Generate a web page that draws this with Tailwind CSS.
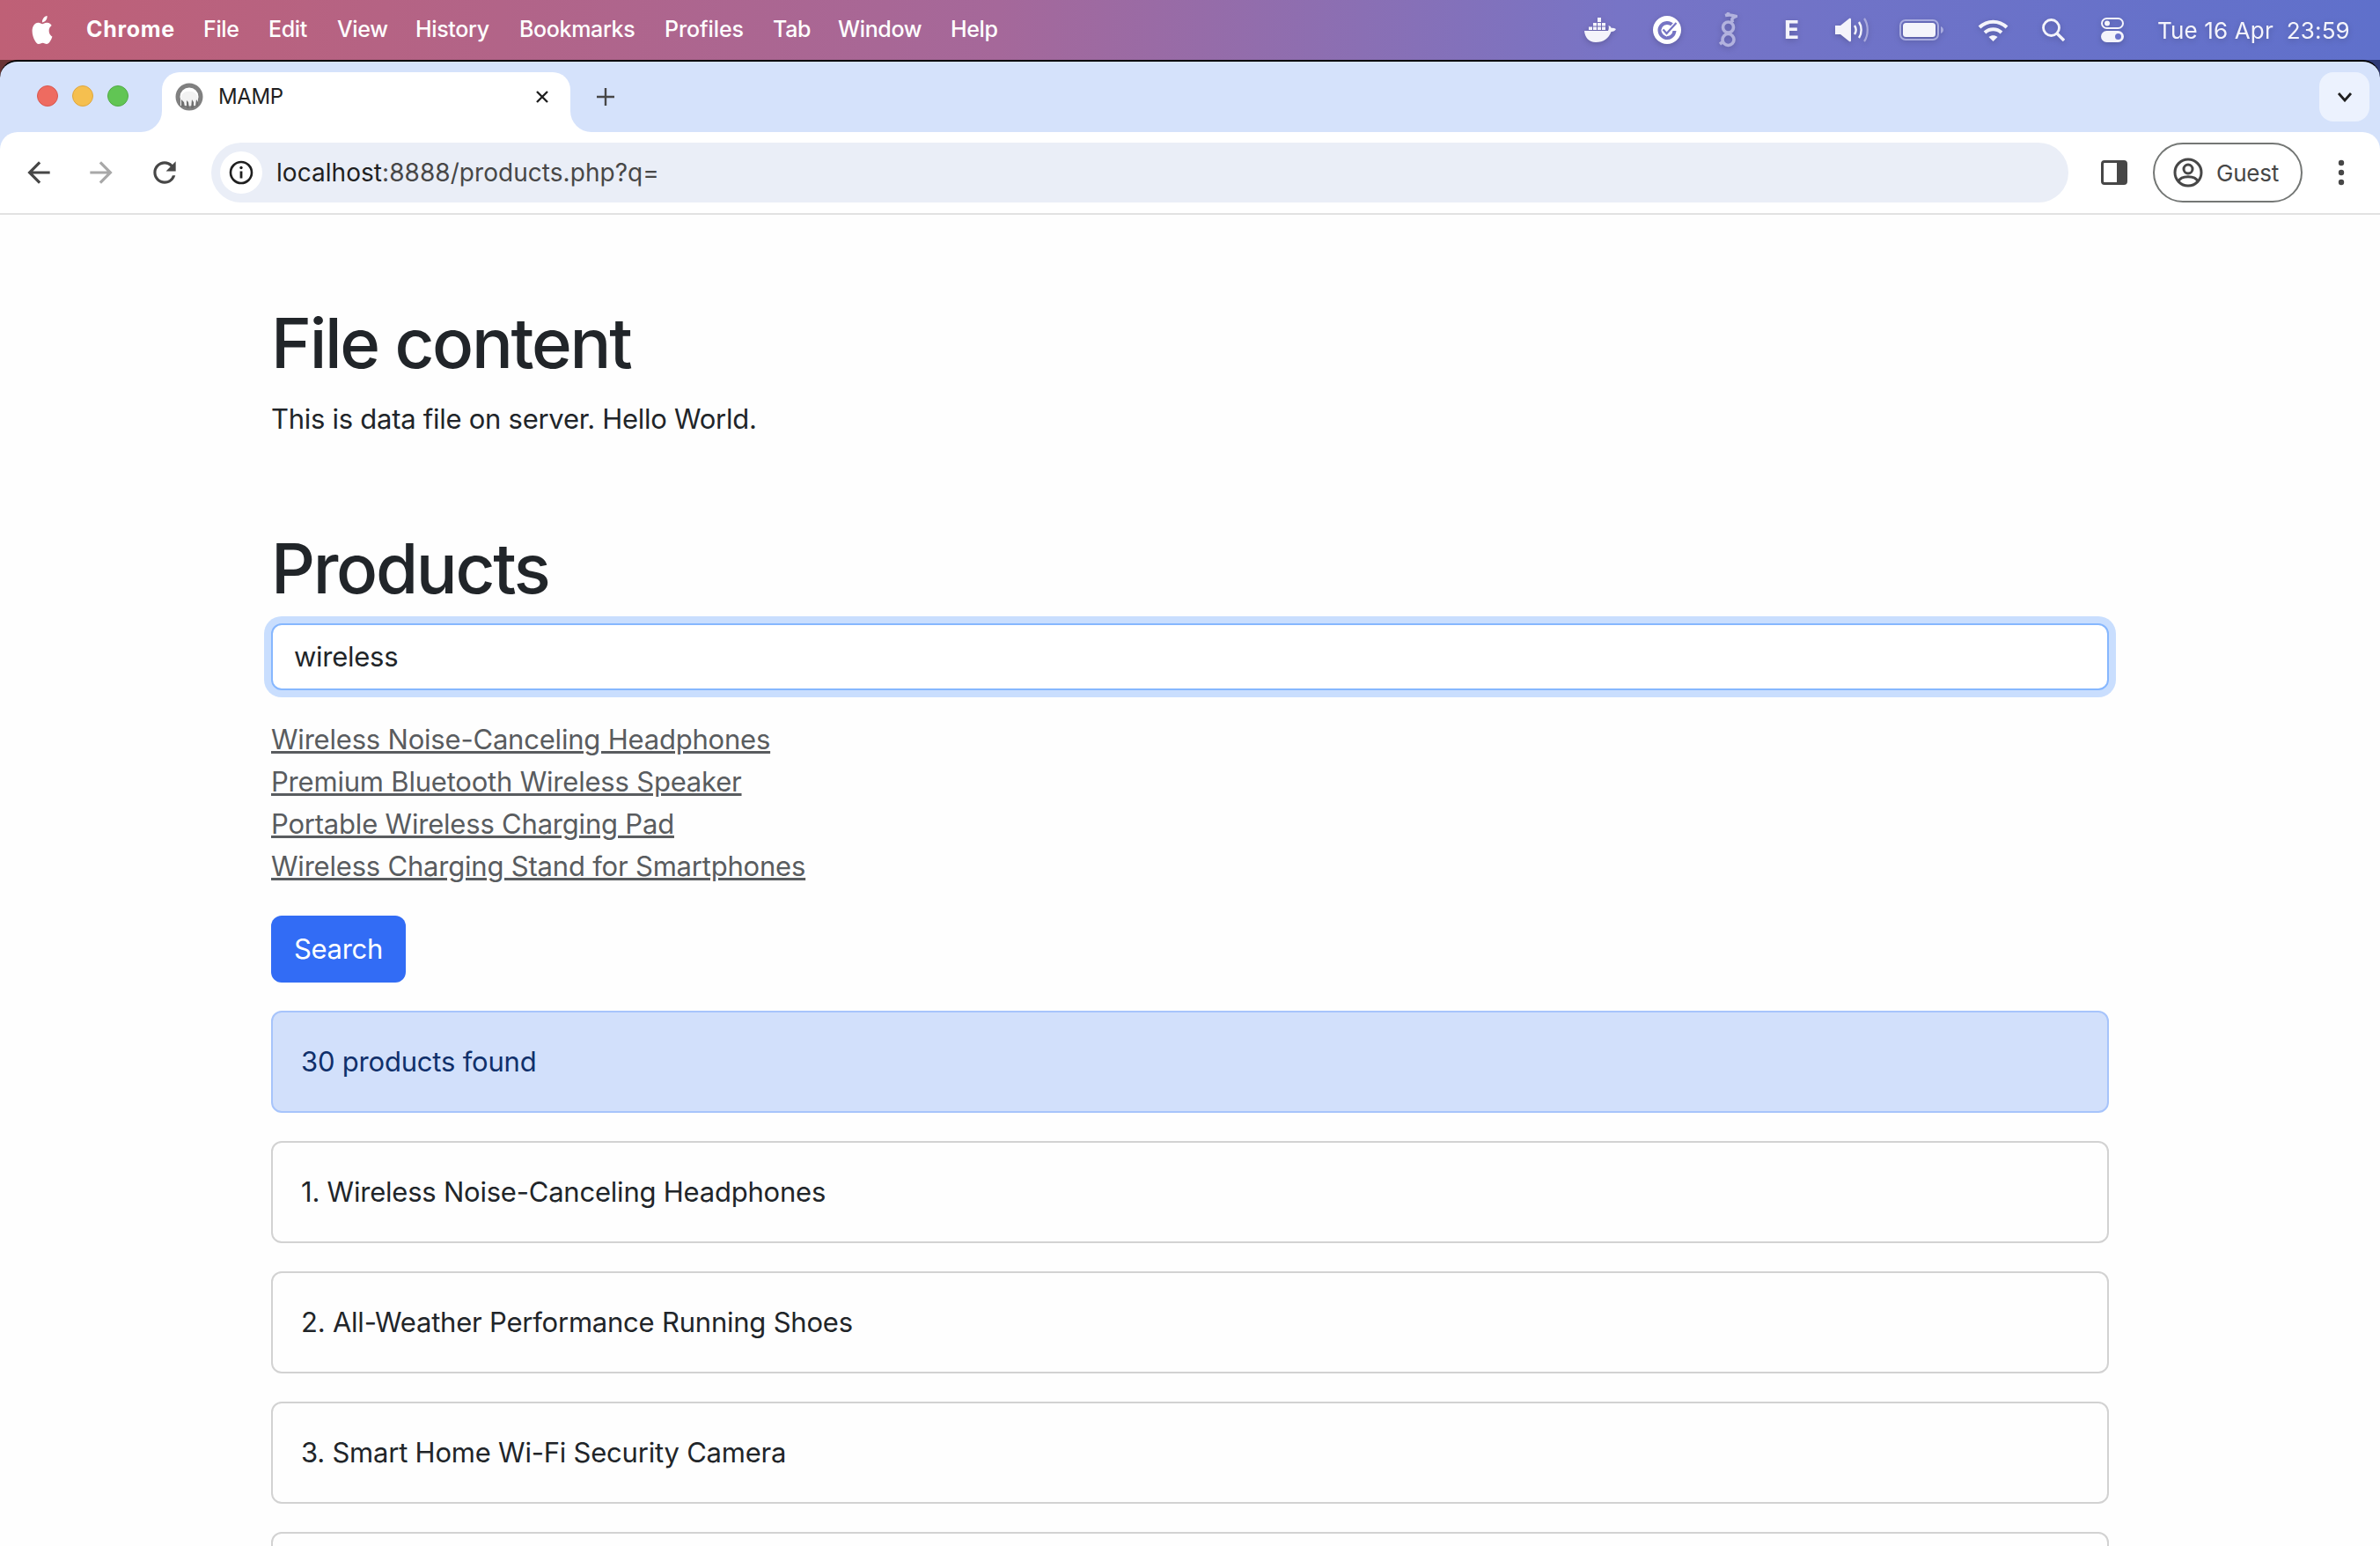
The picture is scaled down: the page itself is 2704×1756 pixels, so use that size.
<!DOCTYPE html>
<html lang="en">

<head>
    <meta charset="UTF-8">
    <meta name="viewport" content="width=device-width, initial-scale=1.0">
    <title>MAMP</title>
    <script src="https://cdn.jsdelivr.net/npm/@tailwindcss/browser@4"></script>
</head>

<body class="w-[2704px] h-[1756px] overflow-hidden bg-white font-['Inter',sans-serif] text-[#212529]">
    <!-- macOS menu bar + wallpaper behind the window corners -->
    <div class="h-[1756px] flex flex-col bg-[linear-gradient(90deg,#bf6076,#a5689a_42%,#7774c6_68%,#5f70cb)]">
        <div class="h-[68px] shrink-0 flex items-center text-white text-[25px] tracking-[-0.35px] font-medium">
            <svg class="ml-[34px] w-[28px] h-[32px] mr-[36px]" viewBox="0 0 24 24" fill="#fff" preserveAspectRatio="none"><path d="M12.152 6.896c-.948 0-2.415-1.078-3.96-1.04-2.04.027-3.91 1.183-4.961 3.014-2.117 3.675-.546 9.103 1.519 12.09 1.013 1.454 2.208 3.09 3.792 3.039 1.52-.065 2.09-.987 3.935-.987 1.831 0 2.35.987 3.96.948 1.637-.026 2.676-1.48 3.676-2.948 1.156-1.688 1.636-3.325 1.662-3.415-.039-.013-3.182-1.221-3.22-4.857-.026-3.04 2.48-4.494 2.597-4.559-1.429-2.09-3.623-2.324-4.39-2.376-2-.156-3.675 1.09-4.61 1.09zM15.53 3.83c.843-1.012 1.4-2.427 1.245-3.83-1.207.052-2.662.805-3.532 1.818-.78.896-1.454 2.338-1.273 3.714 1.338.104 2.715-.688 3.559-1.701"/></svg>
            <span class="w-[133px] font-bold tracking-[0.7px]">Chrome</span>
            <span class="w-[74px]">File</span>
            <span class="w-[78px]">Edit</span>
            <span class="w-[89px]">View</span>
            <span class="w-[118px]">History</span>
            <span class="w-[165px]">Bookmarks</span>
            <span class="w-[123px] tracking-[-0.1px]">Profiles</span>
            <span class="w-[74px]">Tab</span>
            <span class="w-[128px]">Window</span>
            <span>Help</span>

            <!-- status icons -->
            <div class="ml-auto flex items-center drop-shadow-[0_2px_3px_rgba(0,0,0,0.18)]">
                <svg class="w-[36px] h-[28px]" viewBox="0 0 36 28" fill="#f4f4fb"><path d="M0 15h27c1-2 1-4 .5-6 1.600.3 2.800 1.500 3.300 3 1.500-.4 3.200-.1 5.200.9-1 2-3 3.100-5.500 3C28 23 22 28 13 28 5 28 .5 22 0 15z"/><path d="M5 10.500h4v3.500H5zM10 10.500h4v3.500h-4zM15 10.500h4v3.500h-4zM20 10.500h4v3.500h-4zM10 6h4v3.500h-4zM15 6h4v3.500h-4zM20 6h4v3.500h-4zM15 0h4v5h-4z"/></svg>
                <svg class="ml-[42px] w-[32px] h-[32px]" viewBox="0 0 32 32"><circle cx="16" cy="16" r="16" fill="#fff"/><path d="M22.500 11a8.500 8.500 0 1 0 2 6" fill="none" stroke="#7674c4" stroke-width="4"/><path d="M11.500 15.500l4 4.500 12-13" fill="none" stroke="#fff" stroke-width="5"/><path d="M11.500 15.500l4 4.500 11-12" fill="none" stroke="#7674c4" stroke-width="2.200"/></svg>
                <svg class="ml-[43px] w-[21px] h-[40px]" viewBox="0 0 21 40" fill="none" stroke="#b2b2de" stroke-width="3.600"><circle cx="10.500" cy="17" r="6"/><circle cx="10.500" cy="31" r="6.500"/><path d="M7 3.500c4-1 8-.5 12 1-4 1.500-5 3-3.500 7"/><path d="M11 0l-2 4"/><path d="M1 36l4-3"/></svg>
                <span class="ml-[53px] w-[16px] text-[28px] leading-none font-bold text-[#f4f4fb] tracking-normal">E</span>
                <svg class="ml-[42px] w-[38px] h-[28px]" viewBox="0 0 38 28" fill="none"><path d="M0 9h6l10-8c1-.6 2 0 2 1v24c0 1-1 1.600-2 1L6 19H0c-.6 0-1-.4-1-1V10c0-.6.400-1 1-1z" fill="#f4f4fb"/><path d="M22 9c2 3 2 7 0 10" stroke="#f4f4fb" stroke-width="2.400"/><path d="M27 5c3.500 5 3.500 13 0 18" stroke="#f4f4fb" stroke-width="2.400"/><path d="M33 1c5 7 5 19 0 26" stroke="#a9a9dc" stroke-width="2.200"/></svg>
                <svg class="ml-[35px] w-[50px] h-[24px]" viewBox="0 0 50 24" fill="none"><rect x="1" y="1" width="43" height="22" rx="6" stroke="#a9acdf" stroke-width="2"/><rect x="4" y="4" width="37" height="16" rx="3.500" fill="#f4f4fb"/><path d="M47 8c2 1 3 2.500 3 4s-1 3-3 4z" fill="#a9acdf"/></svg>
                <svg class="ml-[39px] w-[35px] h-[25px]" viewBox="0 0 35 25" fill="none" stroke="#f4f4fb" stroke-width="4"><path d="M2 9c9-8.500 22-8.500 31 0"/><path d="M8 15c5.500-5 13.500-5 19 0"/><path d="M17.500 25l-5-5c3-2.500 7-2.500 10 0z" fill="#f4f4fb" stroke="none"/></svg>
                <svg class="ml-[38px] w-[26px] h-[26px]" viewBox="0 0 26 26" fill="none" stroke="#f4f4fb" stroke-width="2.800"><circle cx="10.500" cy="10.500" r="9"/><path d="M17 17l8 8" stroke-width="3.400"/></svg>
                <svg class="ml-[41px] w-[26px] h-[28px]" viewBox="0 0 26 28" fill="none"><rect x="1" y="1" width="24" height="11" rx="5.500" stroke="#f4f4fb" stroke-width="2"/><circle cx="7" cy="6.500" r="3" fill="#f4f4fb"/><path d="M6.500 15h13a6.500 6.500 0 0 1 0 13h-13a6.500 6.500 0 0 1 0-13z" fill="#f4f4fb"/><circle cx="19.500" cy="21.500" r="3.500" fill="#6a72cb"/></svg>
                <span class="ml-[38px] mr-[36px] w-[217px] whitespace-pre font-normal text-[26px] text-[#f4f4fb] tracking-[0.15px]">Tue 16 Apr  23:59</span>
            </div>
        </div>

        <!-- browser window -->
        <div class="flex-1 flex flex-col bg-[linear-gradient(90deg,#6a3434,#2e3a78)]">
            <div class="flex-1 flex flex-col rounded-t-[20px] border-t-2 border-black bg-[#d5e2fb] overflow-hidden">
                <!-- tab strip -->
                <div class="h-[80px] shrink-0 flex items-end relative">
                    <div class="flex gap-[16px] ml-[42px] mb-[29px]">
                        <div class="w-[24px] h-[24px] rounded-full bg-[#ee6b60] border border-[#d9574e]"></div>
                        <div class="w-[24px] h-[24px] rounded-full bg-[#f5bf4f] border border-[#dfa63d]"></div>
                        <div class="w-[24px] h-[24px] rounded-full bg-[#61c554] border border-[#52ab46]"></div>
                    </div>
                    <div class="relative ml-[38px] w-[464px] h-[68px] bg-white rounded-t-[20px] flex items-center text-[#1f1f1f]">
                        <div class="absolute -left-[24px] bottom-0 w-[24px] h-[24px] bg-white"><div class="w-full h-full bg-[#d5e2fb] rounded-br-[24px]"></div></div>
                        <div class="absolute -right-[24px] bottom-0 w-[24px] h-[24px] bg-white"><div class="w-full h-full bg-[#d5e2fb] rounded-bl-[24px]"></div></div>
                        <svg class="ml-[15px] mb-[12px] w-[32px] h-[32px]" viewBox="0 0 32 32"><circle cx="16" cy="16" r="13" fill="#fff" stroke="#808080" stroke-width="5"/><path d="M6 26c0-5 0-12 3-14 3-3 11-3 14 0 3 2 3 9 3 14z" fill="#f2f2f2"/><path d="M7 27v-8l3 3 1 5.500zM13 29v-9l2 2 1 7zM18 29l1-10 2 3v7zM23 27l1-8 2 3v4z" fill="#707070"/></svg>
                        <span class="ml-[17px] mb-[12px] text-[24px] tracking-[-0.4px]">MAMP</span>
                        <svg class="absolute left-[424px] top-[20px] w-[16px] h-[16px]" viewBox="0 0 16 16" stroke="#1f1f1f" stroke-width="2.400"><path d="M2 2l12 12M14 2L2 14"/></svg>
                    </div>
                    <svg class="absolute left-[678px] top-[30px] w-[20px] h-[20px]" viewBox="0 0 20 20" stroke="#474747" stroke-width="2.400"><path d="M10 0v20M0 10h20"/></svg>
                    <div class="absolute left-[2635px] top-[12px] w-[57px] h-[56px] rounded-[16px] bg-[#ecf2fe] flex items-center justify-center">
                        <svg class="w-[18px] h-[12px]" viewBox="0 0 18 12" fill="none" stroke="#1f1f1f" stroke-width="2.800"><path d="M2 2l7 8 7-8"/></svg>
                    </div>
                </div>

                <!-- toolbar -->
                <div class="h-[94px] shrink-0 bg-white rounded-t-[20px] flex items-center border-b-2 border-[#e2e2e2]">
                    <svg class="ml-[25px] w-[38px] h-[38px]" viewBox="0 0 24 24" fill="#474747"><path d="M20 11H7.830l5.590-5.590L12 4l-8 8 8 8 1.410-1.410L7.830 13H20v-2z"/></svg>
                    <svg class="ml-[33px] w-[38px] h-[38px]" viewBox="0 0 24 24" fill="#a8a8a8"><path d="M4 11h12.170l-5.590-5.590L12 4l8 8-8 8-1.410-1.410L16.170 13H4v-2z"/></svg>
                    <svg class="ml-[34px] w-[38px] h-[38px]" viewBox="0 0 24 24" fill="#474747"><path d="M17.650 6.350A7.958 7.958 0 0012 4c-4.420 0-7.990 3.580-7.990 8s3.570 8 7.990 8c3.730 0 6.840-2.550 7.730-6h-2.080A5.990 5.990 0 0112 18c-3.310 0-6-2.690-6-6s2.690-6 6-6c1.660 0 3.140.690 4.220 1.780L13 11h7V4l-2.350 2.350z"/></svg>
                    <!-- omnibox -->
                    <div class="ml-[34px] w-[2110px] h-[68px] rounded-full bg-[#eaeef7] flex items-center pl-[10px]">
                        <div class="w-[48px] h-[48px] rounded-full bg-white flex items-center justify-center">
                            <svg class="w-[28px] h-[28px]" viewBox="0 0 28 28" fill="none"><circle cx="14" cy="14" r="12" stroke="#1f1f1f" stroke-width="2.600"/><path d="M14 12.500v8" stroke="#1f1f1f" stroke-width="2.800"/><circle cx="14" cy="8.500" r="1.700" fill="#1f1f1f"/></svg>
                        </div>
                        <span class="ml-[16px] text-[28px] tracking-[0.05px] text-[#474747]"><span class="text-[#1f1f1f]">localhost</span>:8888/products.php?q=</span>
                    </div>
                    <svg class="ml-[37px] w-[30px] h-[28px]" viewBox="0 0 30 28" fill="none"><rect x="1.500" y="1.500" width="27" height="25" rx="2.500" stroke="#474747" stroke-width="3"/><path d="M18 1.500h8.500a2 2 0 0 1 2 2v21a2 2 0 0 1-2 2H18z" fill="#474747"/></svg>
                    <div class="ml-[29px] w-[170px] h-[68px] rounded-full border-2 border-[#747775] flex items-center pl-[21px] text-[#474747]">
                        <svg class="w-[34px] h-[34px]" viewBox="0 0 34 34" fill="none" stroke="#474747" stroke-width="3"><circle cx="17" cy="17" r="15"/><circle cx="17" cy="13" r="5"/><path d="M6 27c3-7 19-7 22 0"/></svg>
                        <span class="ml-[15px] text-[26px] tracking-[-0.2px]">Guest</span>
                    </div>
                    <svg class="ml-[40px] w-[8px] h-[30px]" viewBox="0 0 8 30" fill="#474747"><circle cx="4" cy="4" r="3.200"/><circle cx="4" cy="15" r="3.200"/><circle cx="4" cy="26" r="3.200"/></svg>
                </div>

                <!-- page -->
                <div class="flex-1 bg-[#fefefe] overflow-hidden px-[308px] pt-[98px]">
                    <h1 class="text-[78px] leading-[96px] font-medium tracking-[-2.3px] mb-[14px]">File content</h1>
                    <p class="text-[31px] leading-[48px] tracking-[-0.27px] mb-[98px]">This is data file on server. Hello World.</p>

                    <h1 class="text-[78px] leading-[96px] font-medium tracking-[-2.3px] mb-[14px]">Products</h1>
                    <div class="h-[76px] rounded-[12px] border-2 border-[#86b7fe] bg-white shadow-[0_0_0_8px_rgba(13,110,253,0.22)] flex items-center px-[24px] text-[31px] tracking-[-0.27px] mb-[32px]">wireless</div>

                    <div class="text-[31px] leading-[48px] tracking-[-0.2px] text-[#595c5f] underline mb-[32px]">
                        <div><a href="#">Wireless Noise-Canceling Headphones</a></div>
                        <div><a href="#">Premium Bluetooth Wireless Speaker</a></div>
                        <div><a href="#">Portable Wireless Charging Pad</a></div>
                        <div><a href="#">Wireless Charging Stand for Smartphones</a></div>
                    </div>

                    <button class="block w-[153px] h-[76px] rounded-[12px] bg-[#326cf5] text-white text-[31px] tracking-[-0.27px] mb-[32px]">Search</button>

                    <div class="h-[116px] rounded-[12px] border-2 border-[#a7c4fb] bg-[#d2e0fb] text-[#10306b] flex items-center px-[32px] text-[31px] tracking-[-0.2px] mb-[32px]">30 products found</div>

                    <div class="flex flex-col gap-[32px] text-[31px] tracking-[-0.22px]">
                        <div class="h-[116px] shrink-0 rounded-[12px] border-2 border-[#d2d2d2] flex items-center px-[32px]">1. Wireless Noise-Canceling Headphones</div>
                        <div class="h-[116px] shrink-0 rounded-[12px] border-2 border-[#d2d2d2] flex items-center px-[32px]">2. All-Weather Performance Running Shoes</div>
                        <div class="h-[116px] shrink-0 rounded-[12px] border-2 border-[#d2d2d2] flex items-center px-[32px]">3. Smart Home Wi-Fi Security Camera</div>
                        <!-- fourth card is cut off by the window, only its top edge shows -->
                        <div class="h-[116px] shrink-0 rounded-[12px] border-2 border-[#d2d2d2]"></div>
                    </div>
                </div>
            </div>
        </div>
    </div>
</body>

</html>
